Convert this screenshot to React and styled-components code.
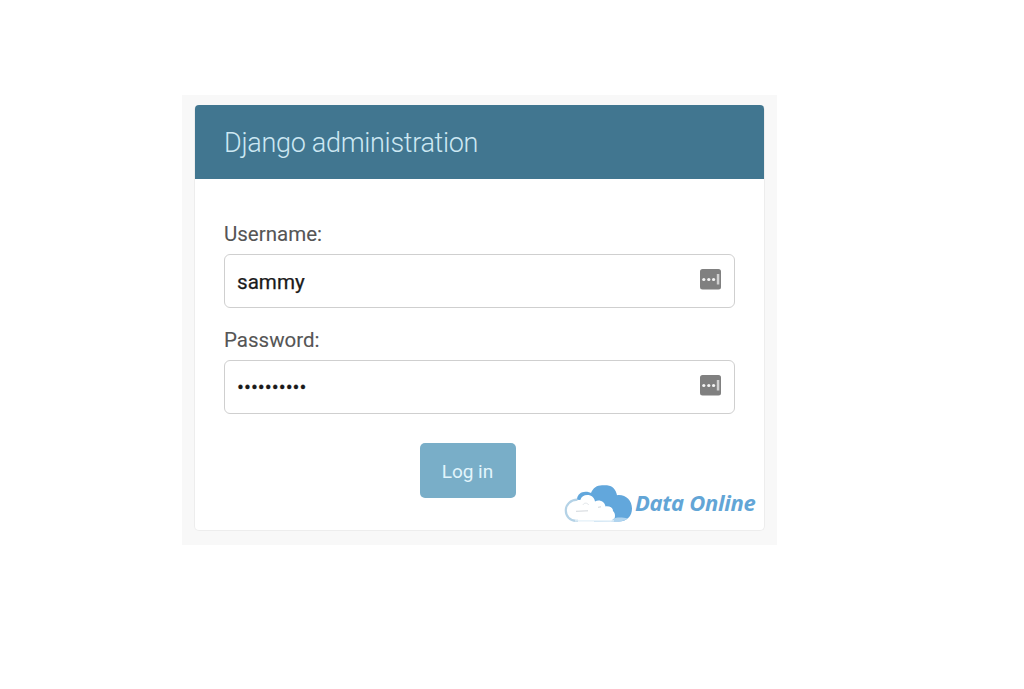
import React from "react";
import styled, { createGlobalStyle } from "styled-components";

const GlobalStyle = createGlobalStyle`
  * { box-sizing: border-box; }
  body { margin: 0; background: #fff; font-family: Roboto, sans-serif; }
`;

const Page = styled.main`
  height: 689px;
  padding: 95px 0 0 182px;
  overflow: hidden;
`;

const Backdrop = styled.div`
  width: 595px;
  height: 450px;
  padding: 10px 12px 14px;
  background: #f8f8f8;
`;

const Card = styled.section`
  position: relative;
  width: 571px;
  height: 426px;
  background: #fff;
  border: 1px solid #ededed;
  border-top: 0;
  border-radius: 5px;
`;

const Header = styled.header`
  display: flex;
  align-items: center;
  height: 74px;
  padding: 1px 29px 0;
  background: #417690;
  border-radius: 4px 4px 0 0;
`;

const Title = styled.h1`
  margin: 0;
  font-size: 27px;
  font-weight: 300;
  line-height: 32px;
  letter-spacing: -0.3px;
  color: #cde8f3;
  white-space: nowrap;
`;

const Form = styled.form`
  display: flex;
  flex-direction: column;
  padding: 43px 29px 0;
`;

const Field = styled.div`
  display: flex;
  flex-direction: column;
  height: 106px;
`;

const Label = styled.label`
  height: 32px;
  font-size: 20.5px;
  line-height: 25px;
  color: #555;
  -webkit-text-stroke: 0.1px #555;
`;

const InputBox = styled.div`
  display: flex;
  align-items: center;
  justify-content: space-between;
  height: 54px;
  padding: 0 13px 0 12px;
  border: 1px solid #cfcfcf;
  border-radius: 6px;
  background: #fff;
`;

const Value = styled.span`
  padding-top: ${(p) => (p.$masked ? "0" : "2px")};
  font-size: 20.6px;
  line-height: 26px;
  color: #1b1b1b;
  -webkit-text-stroke: 0.25px #1b1b1b;
`;

const ManagerIcon = styled.svg`
  display: block;
  width: 21px;
  height: 21px;
  margin-bottom: 4px;
`;

const Submit = styled.button`
  align-self: center;
  width: 96px;
  height: 55px;
  margin: 9px 24px 0 0;
  padding: 2px 0 0;
  border: 0;
  border-radius: 5px;
  background: #79aec8;
  color: #e2f5fc;
  font: 400 19px/24px Roboto, sans-serif;
  letter-spacing: -0.05px;
`;

const Brand = styled.div`
  position: absolute;
  left: 369px;
  top: 379px;
  display: flex;
  align-items: flex-start;
`;

const Cloud = styled.svg`
  display: block;
  width: 70px;
  height: 40px;
`;

const BrandName = styled.span`
  margin: 3px 0 0 1px;
  font: italic 700 22px/30px "Open Sans", sans-serif;
  letter-spacing: -0.3px;
  color: #62a5d6;
  white-space: nowrap;
`;

function FieldIcon() {
  return (
    <ManagerIcon viewBox="0 0 21 21">
      <rect width="21" height="20.5" rx="2.5" fill="#808080" />
      <circle cx="3.8" cy="10.5" r="1.6" fill="#f4f4f4" />
      <circle cx="8.8" cy="10.5" r="1.6" fill="#f4f4f4" />
      <circle cx="13.6" cy="10.5" r="1.6" fill="#f4f4f4" />
      <rect x="16.8" y="5" width="2.5" height="10.5" fill="#d0d0d0" />
    </ManagerIcon>
  );
}

function CloudLogo() {
  return (
    <Cloud viewBox="0 0 70 40">
      <path d="M27 9C29 4 33 1.3 38 1.3H43C49 2 52 6 53 11.2C61 10 68 16 68 24.5C68 32 63 37.5 55 37.5H30Z" fill="#62a7dc" />
      <path d="M12.8 15.5C13.5 10.5 17 7.8 21.5 7.8C24 7.8 26 8.4 28 9.4L32 18L16 19Z" fill="#62a7dc" />
      <path d="M11 37C5.5 36.5 2 32 2 26.5C2 20.5 6.5 16 12.7 15.8L16.3 16C17.3 12.5 20 11 23.3 11C27.5 11 30.3 13.5 31 17.5C34.8 15.2 40.5 17 41.5 22.4C46.5 22 49 24 49 27C51.5 29 52 34 48.5 37.5Z" fill="#fff" />
      <path d="M14 36.8H12C5.8 36.8 1.8 32 1.8 26.5C1.8 20.5 6.3 16 13.5 15.7" fill="none" stroke="#b4d2e6" strokeWidth="2.2" />
      <path d="M49 35C53 32.8 59 33.5 63.5 34.5C61 36.8 58 37.5 54 37.5H47Z" fill="#afd4ef" />
      <path d="M11 36.8H50" fill="none" stroke="#e3f0f8" strokeWidth="1.2" />
      <path d="M19 20.8C20 18.7 23.2 18.5 24.8 21" fill="none" stroke="#e2e6e9" strokeWidth="1" />
      <path d="M12 27.3L24 26.8M34 23.3L37 22.8" fill="none" stroke="#c5ccd2" strokeWidth="0.8" />
    </Cloud>
  );
}

export default function App() {
  return (
    <>
      <GlobalStyle />
      <Page>
        <Backdrop>
          <Card>
            <Header><Title>Django administration</Title></Header>
            <Form onSubmit={(e) => e.preventDefault()}>
              <Field>
                <Label>Username:</Label>
                <InputBox><Value>sammy</Value><FieldIcon /></InputBox>
              </Field>
              <Field>
                <Label>Password:</Label>
                <InputBox><Value $masked>••••••••••</Value><FieldIcon /></InputBox>
              </Field>
              <Submit>Log in</Submit>
            </Form>
            <Brand><CloudLogo /><BrandName>Data Online</BrandName></Brand>
          </Card>
        </Backdrop>
      </Page>
    </>
  );
}
